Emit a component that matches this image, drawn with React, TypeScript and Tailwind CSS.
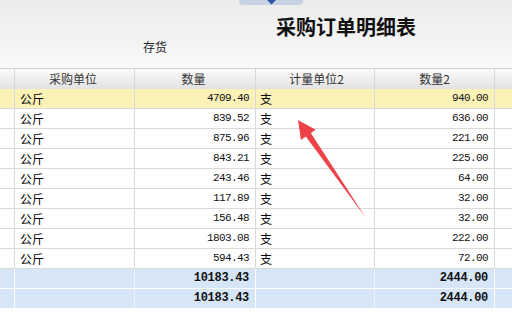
const rows = [
  { unit: "公斤", qty: "4709.40", unit2: "支", qty2: "940.00" },
  { unit: "公斤", qty: "839.52", unit2: "支", qty2: "636.00" },
  { unit: "公斤", qty: "875.96", unit2: "支", qty2: "221.00" },
  { unit: "公斤", qty: "843.21", unit2: "支", qty2: "225.00" },
  { unit: "公斤", qty: "243.46", unit2: "支", qty2: "64.00" },
  { unit: "公斤", qty: "117.89", unit2: "支", qty2: "32.00" },
  { unit: "公斤", qty: "156.48", unit2: "支", qty2: "32.00" },
  { unit: "公斤", qty: "1803.08", unit2: "支", qty2: "222.00" },
  { unit: "公斤", qty: "594.43", unit2: "支", qty2: "72.00" },
];

const cjk = "[font-family:'Noto_Sans_CJK_SC',sans-serif]";
const mono = "[font-family:'Liberation_Mono',monospace]";
const grid = "grid grid-cols-[15px_120px_121px_119px_120px_1fr]";

export default function App() {
  return (
    <div className={`relative w-[512px] h-[312px] overflow-hidden bg-white ${cjk}`}>
      {/* top header area */}
      <div className="relative h-[68px] bg-gradient-to-b from-[#ececec] to-[#f9f9f9]">
        <div className="absolute left-[239px] top-0 w-[64px] h-[5px] rounded-b-[4px] bg-[#c6d3e3] flex justify-center">
          <div className="w-[7px] h-[7px] -mt-[4px] rotate-45 bg-[#2f56a0]" />
        </div>
        <div className="pl-[276px] pt-[14px] h-[40px] text-[20px] font-bold leading-[26px] text-[#111]">
          采购订单明细表
        </div>
        <div className="pl-[143px] text-[12px] leading-[14px] text-[#222]">存货</div>
      </div>

      {/* column header */}
      <div className={`${grid} h-[21px] border-t border-[#cfcfcf] bg-gradient-to-b from-[#fbfbfb] to-[#e2e2e2] text-[12px] leading-[19px] text-[#333]`}>
        <div className="border-r border-[#d8d8d8]" />
        <div className="border-r border-[#d8d8d8] text-center pr-[3px]">采购单位</div>
        <div className="border-r border-[#d8d8d8] text-center pr-[3px]">数量</div>
        <div className="border-r border-[#d8d8d8] text-center pl-[3px]">计量单位2</div>
        <div className="border-r border-[#d8d8d8] text-center">数量2</div>
        <div />
      </div>

      {/* data rows */}
      {rows.map((r, i) => (
        <div
          key={i}
          className={`${grid} h-[20px] border-b border-[#d9d9d9] text-[12px] leading-[19px] text-black ${i === 0 ? "bg-[#fbf2b7]" : "bg-white"}`}
        >
          <div className="border-r border-[#d9d9d9]" />
          <div className="border-r border-[#d9d9d9] pl-[5px]">{r.unit}</div>
          <div className={`border-r border-[#d9d9d9] text-right pr-[6px] text-[11px] tracking-[-0.6px] text-[#111] ${mono}`}>{r.qty}</div>
          <div className="border-r border-[#d9d9d9] pl-[4px]">{r.unit2}</div>
          <div className={`border-r border-[#d9d9d9] text-right pr-[6px] text-[11px] tracking-[-0.6px] text-[#111] ${mono}`}>{r.qty2}</div>
          <div />
        </div>
      ))}

      {/* totals */}
      {[0, 1].map((k) => (
        <div key={k} className={`${grid} h-[20px] border-b border-white bg-[#d6e6f7] text-[12px] tracking-[-0.3px] leading-[19px] font-bold text-[#111] ${mono}`}>
          <div className="border-r border-white" />
          <div className="border-r border-[#eef4fb]" />
          <div className="border-r border-white text-right pr-[6px]">10183.43</div>
          <div className="border-r border-[#eef4fb]" />
          <div className="border-r border-white text-right pr-[6px]">2444.00</div>
          <div />
        </div>
      ))}

      {/* red annotation arrow */}
      <svg className="absolute left-0 top-0" width="512" height="312" viewBox="0 0 512 312">
        <polygon
          points="298,120 315.7,129.7 310.8,133.1 366,218 305.8,136.5 300.9,139.9"
          fill="#ec3338"
          opacity="0.92"
        />
      </svg>
    </div>
  );
}
